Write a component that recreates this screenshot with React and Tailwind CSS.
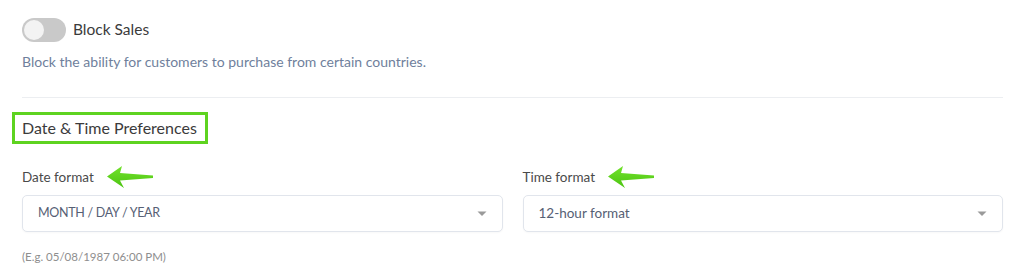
import React from 'react'

const GreenArrow = () => (
  <svg width="48" height="24" viewBox="0 0 48 24" className="ml-[12px]">
    <defs>
      <linearGradient id="ga" x1="0" y1="0" x2="0" y2="1">
        <stop offset="0" stopColor="#72e22c" />
        <stop offset="1" stopColor="#4cc411" />
      </linearGradient>
    </defs>
    <path d="M1 11.5 L16 1 L14 8 L47 10.5 L47 13 L14 15.5 L18 23 Z" fill="url(#ga)" />
  </svg>
)

const Caret = () => (
  <svg width="10" height="6" viewBox="0 0 10 6">
    <path d="M0.5 0.5 L9.5 0.5 L5 5 Z" fill="#9a9a9a" />
  </svg>
)

const SelectBox = ({ value, upper }) => (
  <div className="flex h-[37px] items-center justify-between rounded-[5px] border border-[#e1e5ec] bg-white pl-[15px] pr-[15px] shadow-[0_1px_2px_rgba(0,0,0,0.03)]">
    <span className={upper ? 'text-[12.5px] tracking-[-0.3px] text-[#566074]' : 'text-[13.5px] text-[#566074]'}>{value}</span>
    <Caret />
  </div>
)

const Field = ({ label, value, upper }) => (
  <div className="flex flex-col">
    <div className="flex h-5 items-center">
      <span className="text-[13.5px] text-[#4a4a4a]">{label}</span>
      <GreenArrow />
    </div>
    <div className="mt-2">
      <SelectBox value={value} upper={upper} />
    </div>
  </div>
)

export default function App() {
  return (
    <div className="h-[275px] w-[1024px] overflow-hidden bg-white pl-[22px] pr-[21px] pt-[18px] font-['Lato','Open_Sans',sans-serif]">
      {/* Block sales toggle */}
      <div className="flex h-6 items-center">
        <div className="flex h-6 w-[44px] items-center rounded-full bg-[#c9c9c9] pl-[2px]">
          <div className="h-5 w-5 rounded-full bg-[#f3f3f3]" />
        </div>
        <span className="ml-[7px] text-[15.5px] text-[#3b3b3b]">Block Sales</span>
      </div>
      <p className="mt-[10px] text-[14px] leading-5 text-[#6f7f9c]">
        Block the ability for customers to purchase from certain countries.
      </p>
      <div className="mt-[25px] h-px bg-[#eceef1]" />

      {/* Date & time */}
      <div className="mt-[14px] ml-[-10px] inline-block border-[3px] border-[#5ed320] pl-[7px] pr-[8px]">
        <span className="block text-[16px] leading-[26px] text-[#3b3b3b]">Date &amp; Time Preferences</span>
      </div>

      <div className="mt-[23px] grid grid-cols-2 gap-5">
        <Field label="Date format" value="MONTH / DAY / YEAR" upper />
        <Field label="Time format" value="12-hour format" />
      </div>

      <p className="mt-[17px] text-[11.5px] leading-4 text-[#8e8e8e]">(E.g. 05/08/1987 06:00 PM)</p>
    </div>
  )
}
